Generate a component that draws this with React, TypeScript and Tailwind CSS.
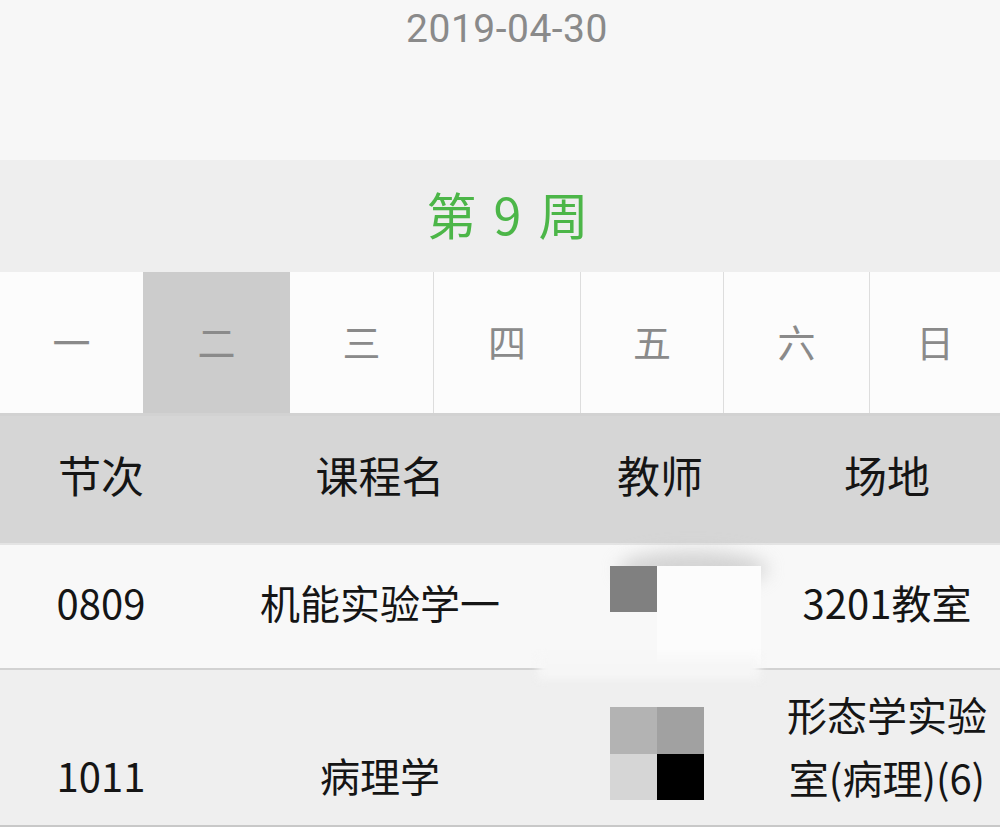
// Course timetable — day view
const DAYS = ['一', '二', '三', '四', '五', '六', '日'];
const SELECTED_DAY = 1;

const font = "font-['Noto_Sans_CJK_SC','Noto_Sans',sans-serif]";

export default function App() {
  return (
    <div className={`w-[1000px] h-[827px] overflow-hidden bg-[#f7f7f7] ${font}`}>
      {/* date */}
      <div className="h-[160px] bg-[#f7f7f7] flex justify-center pt-[7px] pl-[14px]">
        <p className="font-['Roboto',sans-serif] text-[39px] leading-[44px] text-[#8a8a8a] tracking-[0.5px]">2019-04-30</p>
      </div>

      {/* week */}
      <div className="h-[112px] bg-[#eeeeee] flex items-center justify-center pl-[18px]">
        <p className="text-[50px] leading-[60px] text-[#4cb648] tracking-[3px] -mt-[6px]">第 9 周</p>
      </div>

      {/* weekday tabs */}
      <div className="h-[141px] grid grid-cols-[143px_147px_143px_147px_143px_146px_1fr] bg-[#fcfcfc]">
        {DAYS.map((d, i) => (
          <div
            key={d}
            className={
              'flex items-center justify-center text-[38px] text-[#8a8a8a] pb-[4px] ' +
              (i === SELECTED_DAY ? 'bg-[#cccccc] text-[#7a7a7a] ' : '') +
              (i >= 3 ? 'border-l border-[#dddddd]' : '')
            }
          >
            {d}
          </div>
        ))}
      </div>
      <div className="h-[3px] bg-[#d2d2d2]" />

      {/* header */}
      <div className="h-[127px] bg-[#d6d6d6] grid grid-cols-[202px_356px_204px_1fr] items-center text-[43px] text-[#151515] pb-[10px]">
        <div className="text-center">节次</div>
        <div className="text-center">课程名</div>
        <div className="text-center">教师</div>
        <div className="text-center pl-[12px]">场地</div>
      </div>
      <div className="h-[2px] bg-[#e4e4e4]" />

      {/* row 1 */}
      <div className="h-[123px] bg-[#f8f8f8] grid grid-cols-[202px_356px_204px_1fr] items-center text-[40px] leading-[63px] text-[#151515]">
        <div className="text-center pb-[9px]">0809</div>
        <div className="text-center pb-[9px]">机能实验学一</div>
        <div className="relative self-stretch pl-[52px] pt-[21px]">
          <div className="absolute left-[60px] top-[6px] w-[150px] h-[36px] rounded-[50%] bg-[#c4c4c4] blur-[9px] opacity-70" />
          <div className="absolute left-[99px] top-[21px] w-[104px] h-[98px] bg-[#fcfcfc]" />
          <div className="absolute -left-[20px] top-[112px] w-[222px] h-[22px] bg-[#f6f6f6] blur-[5px] z-10" />
          <div className="relative w-[47px] h-[46px] bg-[#808080]" />
        </div>
        <div className="text-center pl-[12px] pb-[9px]">3201教室</div>
      </div>
      <div className="h-[2px] bg-[#d2d2d2]" />

      {/* row 2 */}
      <div className="h-[155px] bg-[#efefef] grid grid-cols-[202px_356px_204px_1fr] text-[40px] leading-[63px] text-[#151515]">
        <div className="text-center self-end pb-[18px]">1011</div>
        <div className="text-center self-end pb-[18px]">病理学</div>
        <div className="pl-[52px] pt-[37px]">
          <div className="grid grid-cols-2 w-[94px] h-[93px]">
            <div className="bg-[#b3b3b3]" />
            <div className="bg-[#a1a1a1]" />
            <div className="bg-[#d6d6d6]" />
            <div className="bg-[#000000]" />
          </div>
        </div>
        <div className="self-center text-center pl-[12px] pb-[4px]">
          形态学实验
          <br />
          室(病理)(6)
        </div>
      </div>
      <div className="h-[2px] bg-[#c8c8c8]" />
    </div>
  );
}
